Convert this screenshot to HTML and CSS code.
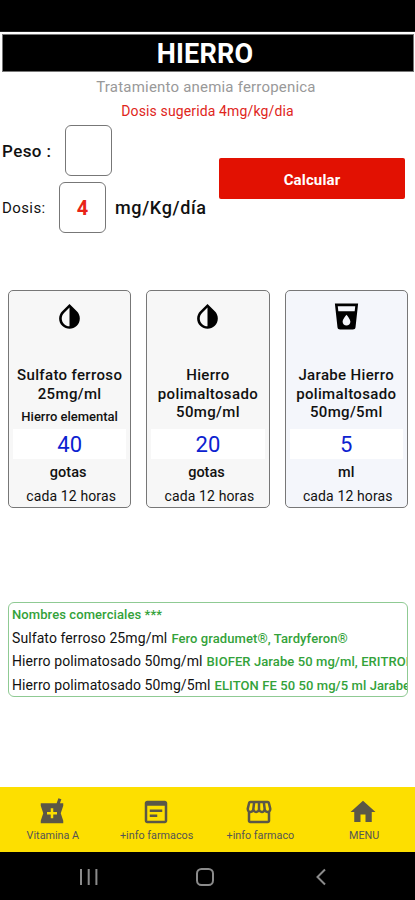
FILE: index.html
```html
<!DOCTYPE html>
<html lang="es">
<head>
<meta charset="utf-8">
<title>Hierro</title>
<link rel="stylesheet" href="styles.css">
</head>
<body>
<div class="status"></div>
<header class="title"><span>HIERRO</span></header>
<main>
  <p class="subtitle"><span>Tratamiento anemia ferropenica</span></p>
  <p class="hint"><span>Dosis sugerida 4mg/kg/dia</span></p>
  <section class="form">
    <div class="fields">
      <div class="field"><span class="peso">Peso :</span><div class="box"></div></div>
      <div class="field second"><span class="dosis">Dosis:</span><div class="box">4</div><span class="unit">mg/Kg/día</span></div>
    </div>
    <button class="calc">Calcular</button>
  </section>
  <section class="cards">
    <article class="card">
      <svg class="icon" viewBox="0 0 24 24"><path d="M17.66 7.93L12 2.27 6.34 7.93c-3.12 3.12-3.12 8.19 0 11.31C7.9 20.8 9.95 21.58 12 21.58s4.1-.78 5.66-2.34c3.12-3.12 3.12-8.19 0-11.31zM12 19.59c-1.6 0-3.11-.62-4.24-1.76C6.62 16.69 6 15.19 6 13.59s.62-3.11 1.76-4.24L12 5.1v14.49z"/></svg>
      <h2>Sulfato ferroso<br>25mg/ml</h2>
      <p class="note">Hierro elemental</p>
      <p class="value">40</p>
      <p class="measure">gotas</p>
      <p class="every">cada 12 horas</p>
    </article>
    <article class="card">
      <svg class="icon" viewBox="0 0 24 24"><path d="M17.66 7.93L12 2.27 6.34 7.93c-3.12 3.12-3.12 8.19 0 11.31C7.9 20.8 9.95 21.58 12 21.58s4.1-.78 5.66-2.34c3.12-3.12 3.12-8.19 0-11.31zM12 19.59c-1.6 0-3.11-.62-4.24-1.76C6.62 16.69 6 15.19 6 13.59s.62-3.11 1.76-4.24L12 5.1v14.49z"/></svg>
      <h2>Hierro<br>polimaltosado<br>50mg/ml</h2>
      <p class="value">20</p>
      <p class="measure">gotas</p>
      <p class="every">cada 12 horas</p>
    </article>
    <article class="card syrup">
      <svg class="icon" viewBox="0 0 24 24"><path d="M3 2l2.01 18.23C5.13 21.23 5.97 22 7 22h10c1.03 0 1.87-.77 1.99-1.77L21 2H3zm9 17c-1.66 0-3-1.34-3-3 0-2 3-5.4 3-5.4s3 3.4 3 5.4c0 1.66-1.34 3-3 3zm6.33-11H5.67l-.44-4h13.53l-.43 4z"/></svg>
      <h2>Jarabe Hierro<br>polimaltosado<br>50mg/5ml</h2>
      <p class="value">5</p>
      <p class="measure">ml</p>
      <p class="every">cada 12 horas</p>
    </article>
  </section>
  <section class="brands">
    <p><b>Nombres comerciales ***</b></p>
    <p><span>Sulfato ferroso 25mg/ml</span><b>Fero gradumet®, Tardyferon®</b></p>
    <p><span>Hierro polimatosado 50mg/ml</span><b>BIOFER Jarabe 50 mg/ml, ERITROF</b></p>
    <p><span>Hierro polimatosado 50mg/5ml</span><b>ELITON FE 50 50 mg/5 ml Jarabe</b></p>
  </section>
</main>
<nav class="tabs">
  <a class="tab"><svg viewBox="0 0 24 24"><path d="M21 5h-2.64l1.14-3.14L17.15 1l-1.46 4H3v2l2 6-2 6v2h18v-2l-2-6 2-6V5zm-5 9h-3v3h-2v-3H8v-2h3V9h2v3h3v2z"/></svg><span>Vitamina A</span></a>
  <a class="tab"><svg viewBox="0 0 24 24"><path fill-rule="evenodd" d="M19 3H5c-1.1 0-2 .9-2 2v14c0 1.1.9 2 2 2h14c1.1 0 2-.9 2-2V5c0-1.1-.9-2-2-2zm0 16H5V7h14v12zM7 10h10v2H7zM7 14h6v2H7z"/></svg><span>+info farmacos</span></a>
  <a class="tab"><svg viewBox="0 0 24 24"><path d="M21.9 8.89l-1.05-4.37c-.22-.9-1-1.52-1.91-1.52H5.05c-.9 0-1.69.63-1.9 1.52L2.1 8.89c-.24 1.02-.02 2.06.62 2.88.08.11.19.19.28.29V19c0 1.1.9 2 2 2h14c1.1 0 2-.9 2-2v-6.94c.09-.09.2-.18.28-.28.64-.82.87-1.87.62-2.89zm-2.99-3.9l1.05 4.37c.1.42.01.84-.25 1.17-.14.18-.44.47-.94.47-.61 0-1.14-.49-1.21-1.14L16.98 5l1.93-.01zM13 5h1.96l.54 4.52c.05.39-.07.78-.33 1.07-.22.26-.54.41-.95.41-.67 0-1.22-.59-1.22-1.31V5zM8.49 9.52L9.04 5H11v4.69c0 .72-.55 1.31-1.29 1.31-.34 0-.65-.15-.89-.41-.25-.29-.37-.68-.33-1.07zm-4.45-.16L5.05 5h1.97l-.58 4.86c-.08.65-.6 1.14-1.21 1.14-.49 0-.8-.29-.93-.47-.27-.32-.36-.75-.26-1.17zM5 19v-6.03c.08.01.15.03.23.03.87 0 1.66-.36 2.24-.95.6.6 1.4.95 2.31.95.87 0 1.65-.36 2.23-.93.59.57 1.39.93 2.29.93.84 0 1.64-.35 2.24-.95.58.59 1.37.95 2.24.95.08 0 .15-.02.23-.03V19H5z"/></svg><span>+info farmaco</span></a>
  <a class="tab"><svg viewBox="0 0 24 24"><path d="M10 20v-6h4v6h5v-8h3L12 3 2 12h3v8z"/></svg><span>MENU</span></a>
</nav>
<footer class="system">
  <svg viewBox="0 0 24 24"><path d="M4 4v16M11.7 4v16M19.4 4v16"/></svg>
  <svg viewBox="0 0 24 24"><rect x="4" y="4" width="16" height="16" rx="4.5"/></svg>
  <svg viewBox="0 0 24 24"><path d="M16 4.5L8.5 12l7.5 7.5"/></svg>
</footer>
</body>
</html>
```
FILE: styles.css
```css
* { box-sizing: border-box; }
body {
  margin: 0;
  width: 415px;
  height: 900px;
  overflow: hidden;
  display: flex;
  flex-direction: column;
  background: #fff;
  color: #111;
  font-family: Roboto, "Liberation Sans", sans-serif;
}
p, h2 { margin: 0; white-space: nowrap; }
.status { height: 32px; background: #000; border-bottom: 1px solid #222; }
.title {
  height: 38px;
  margin: 2px 1px 0 2px;
  padding-right: 6px;
  background: #000;
  border: 1px solid #777;
  color: #fff;
  font-weight: 700;
  font-size: 27px;
  letter-spacing: .2px;
  line-height: 38px;
  text-align: center;
}
main { height: 715px; }
.subtitle, .hint { text-align: center; line-height: 24px; }
.subtitle { padding: 3px 3px 0 0; color: #999; font-size: 15px; letter-spacing: .2px; }
.hint { color: #e0251b; font-size: 14px; letter-spacing: .13px; }
.form { display: flex; margin-top: 2px; height: 108px; }
.fields { width: 219px; }
.field { display: flex; align-items: center; height: 51px; padding-left: 2px; }
.second { margin-top: 6px; }
.box {
  width: 47px;
  height: 51px;
  border: 1px solid #777;
  border-radius: 6px;
  background: #fff;
  color: #e82417;
  font-size: 20px;
  font-weight: 700;
  line-height: 51px;
  text-align: center;
}
.peso { width: 63px; font-size: 17px; font-weight: 500; letter-spacing: .4px; }
.dosis { width: 57px; font-size: 15px; letter-spacing: .4px; }
.unit { margin-left: 9px; font-size: 18px; font-weight: 500; letter-spacing: .65px; }
.calc {
  width: 186px;
  height: 41px;
  margin-top: 33px;
  padding: 2px 0 0;
  border: 0;
  border-radius: 2px;
  background: #e21102;
  color: #fff;
  font: 700 15px Roboto, "Liberation Sans", sans-serif;
  letter-spacing: .15px;
}
.cards { display: flex; gap: 15px; margin: 57px 7px 0 8px; }
.card {
  width: 123.3px;
  height: 218px;
  display: grid;
  grid-template-rows: 75px 56px 7px 30px 27px 21px;
  justify-items: center;
  border: 1px solid #777;
  border-radius: 5px;
  background: #f7f7f7;
}
.syrup { background: #f4f6fb; }
.icon { width: 31px; height: 31px; margin-top: 10px; fill: #000; }
.card h2 { grid-row: 2; grid-column: 1; font-size: 15px; line-height: 18.5px; font-weight: 500; letter-spacing: .35px; text-align: center; }
.note { grid-row: 2; grid-column: 1; align-self: end; margin-bottom: -4px; font-size: 13px; line-height: 18px; font-weight: 500; }
.value { grid-row: 4; justify-self: stretch; margin: 0 4px; background: #fff; color: #0c22d0; font-size: 22px; line-height: 31px; text-align: center; }
.measure { grid-row: 5; padding-right: 3px; font-size: 14.5px; line-height: 28px; font-weight: 500; }
.syrup .measure { padding-right: 0; }
.every { grid-row: 6; padding-left: 3px; font-size: 14px; line-height: 21px; letter-spacing: .12px; }
.brands {
  height: 95px;
  margin: 94px 7px 0 8px;
  padding-left: 3px;
  border: 1px solid #8fca93;
  border-radius: 6px;
  overflow: hidden;
  font-size: 14px;
  line-height: 23.5px;
  letter-spacing: .09px;
}
.brands p { display: flex; gap: 4px; }
.brands b { color: #33a23a; font-size: 13px; font-weight: 500; }
.tabs { height: 65px; display: flex; background: #fddf00; }
.tab { flex: 1; display: flex; flex-direction: column; align-items: center; color: #555; font-size: 10.8px; line-height: 14px; white-space: nowrap; }
.tab svg { width: 30px; height: 30px; margin-top: 10px; fill: #5b5747; }
.tab span { margin-top: 2px; padding-left: 2px; }
.system { height: 48px; display: flex; background: #000; padding: 13px 0 0 31px; }
.system svg { width: 24px; height: 24px; margin: 0 46px 0 46px; flex: none; fill: none; stroke: #8b8b8b; stroke-width: 2; }
```
